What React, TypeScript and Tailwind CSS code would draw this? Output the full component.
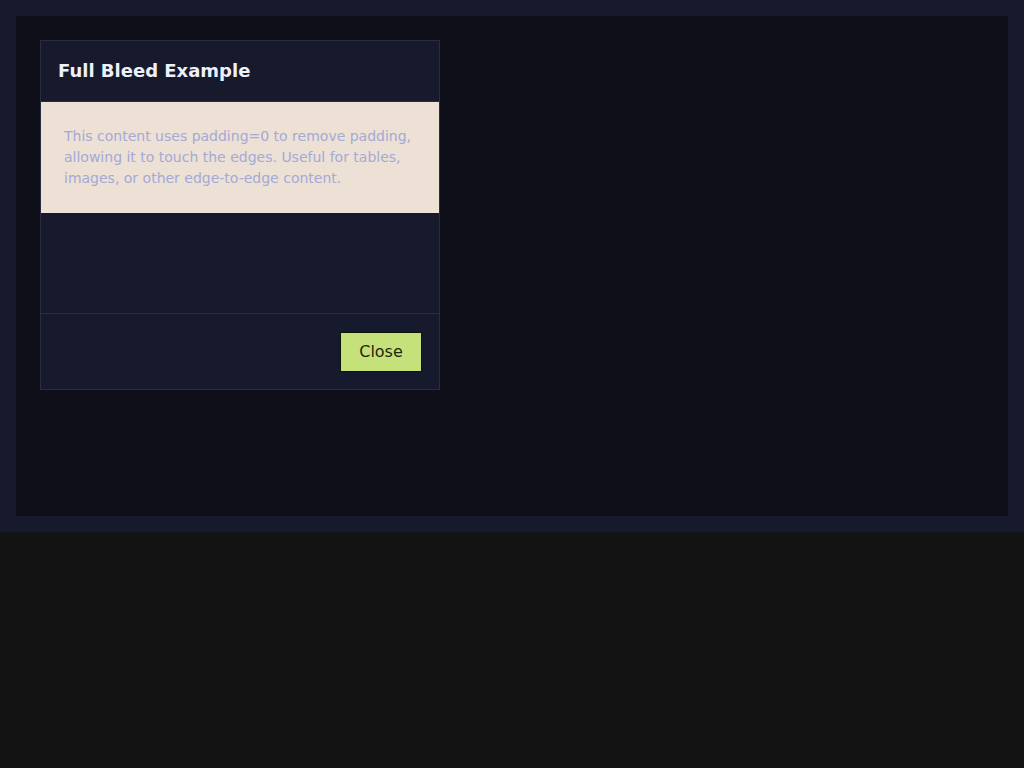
export default function App() {
  return (
    <div className="min-h-screen bg-[#131313]" style={{ fontFamily: '"DejaVu Sans", sans-serif' }}>
      <div className="bg-[#171a2d] p-4">
        <div className="h-[500px] bg-[#0f0f1a] p-6">
          <div className="w-[400px] border border-[#2a2d42] bg-[#171a2c]">
            <div className="flex h-[61px] items-center border-b border-[#2a2d42] px-[17px] pb-[2px]">
              <h2 className="text-[18px] font-bold text-[#eef0fa]">Full Bleed Example</h2>
            </div>
            <div className="bg-[#ede0d4] px-[23px] py-6">
              <p className="text-[14px] leading-[21px] text-[#a3aad8]">
                This content uses padding=0 to remove padding, allowing it to touch the edges. Useful for tables,
                images, or other edge-to-edge content.
              </p>
            </div>
            <div className="h-[100px]" />
            <div className="flex h-[76px] items-center justify-end border-t border-[#2a2d42] pr-[17px]">
              <button className="h-[40px] w-[82px] border border-[#0f1408] bg-[#c5e17a] text-[16px] text-[#23270f]">
                Close
              </button>
            </div>
          </div>
        </div>
      </div>
    </div>
  );
}
